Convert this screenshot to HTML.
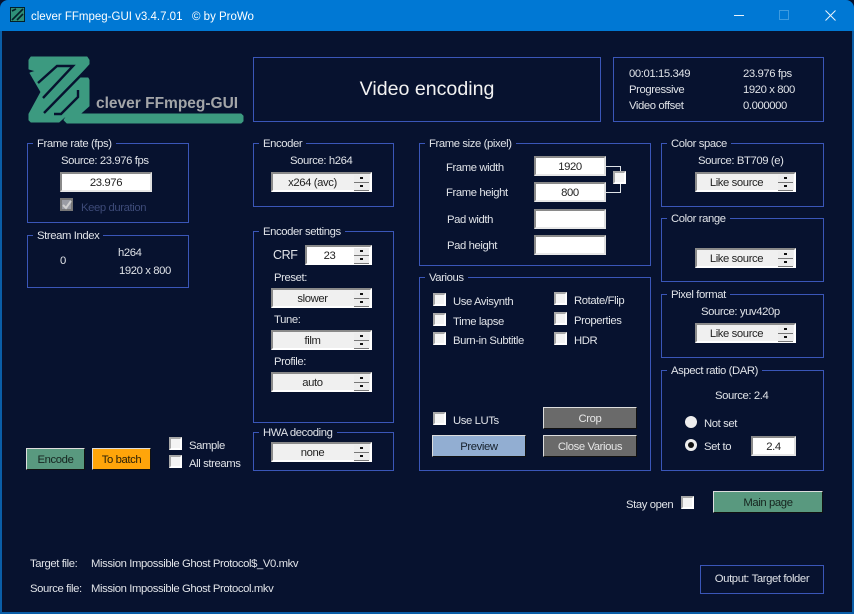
<!DOCTYPE html>
<html><head><meta charset="utf-8"><style>
html,body{margin:0;padding:0;background:#0a1a3a}
#w{position:relative;width:854px;height:614px;overflow:hidden;background:#07122f;font-family:"Liberation Sans",sans-serif;font-size:11.3px;letter-spacing:-.4px;color:#e0e3e8}
#w div{position:absolute;box-sizing:border-box;white-space:nowrap}
.t{line-height:14px;margin-top:1px}
.c{text-align:center}
.g{border:1px solid #3a56b8}
.l{background:#07122f;padding:0 4px;left:5px;top:-6px;line-height:12px;height:12px}
.i{background:#fff;border:2px solid;border-color:#8a8a8a #e0e0e0 #e8e8e8 #8a8a8a;color:#222;text-align:center;line-height:18px}
.s{background:#f0f0f0;border:2px solid;border-color:#8a8a8a #fff #fff #8a8a8a;color:#222;text-align:center;line-height:19px;width:101px;height:20px;padding-right:18px}
.s b{position:absolute;right:1px;top:1px;width:15px;height:7px;background:#ededed;border-bottom:1px solid #777;display:block}
.s i{position:absolute;right:1px;top:9px;width:15px;height:7px;background:#ededed;border-bottom:1px solid #777;display:block}
.s b:after,.s i:after{content:"";position:absolute;left:6px;top:2px;width:3px;height:2px;background:#111}
.k{width:13px;height:13px;background:#f4f4f4;border:2px solid;border-color:#a8a8a8 #fff #fff #a8a8a8}
.b{border:1px solid;border-color:#ddd #111 #111 #ddd;text-align:center;color:#16241f;line-height:22px}
</style></head><body><div id="w">
<div style="left:0;top:0;width:854px;height:31px;background:#0078d4;border-radius:8px 8px 0 0"></div>
<div style="left:0;top:31px;width:2px;height:583px;background:#0a5ea8"></div>
<div style="right:0;top:31px;width:2px;height:583px;background:#0a5ea8"></div>
<div style="left:0;top:612px;width:854px;height:2px;background:#0a5ea8"></div>
<div style="left:10px;top:7px;width:15px;height:15px;background:#2f8f78;border:1px solid #04202a"></div>
<svg style="position:absolute;left:10px;top:7px" width="15" height="15"><path d="M2 4L6 2M2 13L13 2M7 13L13 7" stroke="#04202a" stroke-width="1.6" fill="none"/></svg>
<div class="t" style="left:31px;top:9px;color:#fff;font-size:11.5px;letter-spacing:0;line-height:14px">clever FFmpeg-GUI v3.4.7.01</div>
<div class="t" style="left:192px;top:9px;color:#fff;font-size:11.5px;letter-spacing:0;line-height:14px">© by ProWo</div>
<div style="left:734px;top:15px;width:10px;height:1px;background:#e8f2fb"></div>
<div style="left:779px;top:10px;width:10px;height:10px;border:1px solid #3d9be0"></div>
<svg style="position:absolute;left:825px;top:10px" width="11" height="11"><path d="M0.5 0.5L10.5 10.5M10.5 0.5L0.5 10.5" stroke="#eaf4fc" stroke-width="1"/></svg>

<svg style="position:absolute;left:0;top:0" width="250" height="130">
<path d="M31 57H87L89 60V64L80 74V78H88L89 80V106L80 114H241L243 116V121L241 123H67L64 120L68 114L59 122H31L29 120V114L41 92L30 73L36 71L29 69V60Z" fill="#3c9a80" stroke="#3c9a80" stroke-linejoin="round"/>
<g fill="none" stroke="#07122f" stroke-width="2.4">
<path d="M38 83L57 66H73L43 98"/>
<path d="M44 113L90 66"/>
<path d="M54 114H61L78 97V90"/>
</g>
</svg>
<div class="t" style="left:96px;top:94px;font-size:15.5px;letter-spacing:0;font-weight:bold;color:#a3a5a8;line-height:18px">clever FFmpeg-GUI</div>

<div class="g c" style="left:253px;top:57px;width:348px;height:65px;font-size:19.6px;letter-spacing:0;line-height:62px;color:#f2f2f2">Video encoding</div>
<div class="g" style="left:613px;top:57px;width:211px;height:65px"></div>
<div class="t" style="left:629px;top:66px;">00:01:15.349</div><div class="t" style="left:743px;top:66px;">23.976 fps</div>
<div class="t" style="left:629px;top:82px;">Progressive</div><div class="t" style="left:743px;top:82px;">1920 x 800</div>
<div class="t" style="left:629px;top:98px;">Video offset</div><div class="t" style="left:743px;top:98px;">0.000000</div>

<div class="g" style="left:27px;top:143px;width:162px;height:80px"><div class="l">Frame rate (fps)</div></div>
<div class="t" style="left:61px;top:153px">Source: 23.976 fps</div>
<div class="i" style="left:60px;top:172px;width:92px;height:20px">23.976</div>
<div class="k" style="left:60px;top:198px;background:#9a9ca4;border-color:#777"></div>
<svg style="position:absolute;left:60px;top:198px" width="14" height="14"><path d="M3 7L6 10L11 3" stroke="#d0d0d0" stroke-width="2" fill="none"/></svg>
<div class="t" style="left:81px;top:200px;color:#3d4a78">Keep duration</div>

<div class="g" style="left:27px;top:235px;width:162px;height:53px"><div class="l">Stream Index</div></div>
<div class="t" style="left:60px;top:253px">0</div>
<div class="t" style="left:118px;top:245px">h264</div>
<div class="t" style="left:119px;top:263px">1920 x 800</div>

<div class="g" style="left:253px;top:143px;width:141px;height:64px"><div class="l">Encoder</div></div>
<div class="t" style="left:290px;top:153px">Source: h264</div>
<div class="s" style="left:271px;top:172px">x264 (avc)<b></b><i></i></div>

<div class="g" style="left:253px;top:231px;width:141px;height:192px"><div class="l">Encoder settings</div></div>
<div class="t" style="left:273px;top:247px;font-size:12.5px">CRF</div>
<div class="s" style="left:305px;top:245px;width:67px;background:#fff">23<b></b><i></i></div>
<div class="t" style="left:274px;top:270px">Preset:</div>
<div class="s" style="left:271px;top:288px">slower<b></b><i></i></div>
<div class="t" style="left:274px;top:312px">Tune:</div>
<div class="s" style="left:271px;top:330px">film<b></b><i></i></div>
<div class="t" style="left:274px;top:354px">Profile:</div>
<div class="s" style="left:271px;top:372px">auto<b></b><i></i></div>

<div class="g" style="left:253px;top:432px;width:141px;height:39px"><div class="l">HWA decoding</div></div>
<div class="s" style="left:271px;top:442px">none<b></b><i></i></div>

<div class="g" style="left:419px;top:143px;width:232px;height:123px"><div class="l">Frame size (pixel)</div></div>
<div class="t" style="left:446px;top:160px">Frame width</div>
<div class="t" style="left:446px;top:185px">Frame height</div>
<div class="t" style="left:447px;top:212px">Pad width</div>
<div class="t" style="left:447px;top:238px">Pad height</div>
<div class="i" style="left:534px;top:156px;width:72px;height:20px">1920</div>
<div class="i" style="left:534px;top:182px;width:72px;height:20px">800</div>
<div class="i" style="left:534px;top:209px;width:72px;height:20px"></div>
<div class="i" style="left:534px;top:235px;width:72px;height:20px"></div>
<div style="left:606px;top:166px;width:15px;height:27px;border:1px solid #dfe3e8;border-left:0"></div>
<div class="k" style="left:613px;top:171px"></div>

<div class="g" style="left:419px;top:277px;width:232px;height:194px"><div class="l">Various</div></div>
<div class="k" style="left:433px;top:293px"></div><div class="t" style="left:453px;top:294px">Use Avisynth</div>
<div class="k" style="left:433px;top:313px"></div><div class="t" style="left:453px;top:314px">Time lapse</div>
<div class="k" style="left:433px;top:332px"></div><div class="t" style="left:453px;top:333px">Burn-in Subtitle</div>
<div class="k" style="left:554px;top:292px"></div><div class="t" style="left:574px;top:293px">Rotate/Flip</div>
<div class="k" style="left:554px;top:312px"></div><div class="t" style="left:574px;top:313px">Properties</div>
<div class="k" style="left:554px;top:332px"></div><div class="t" style="left:574px;top:333px">HDR</div>
<div class="k" style="left:433px;top:412px"></div><div class="t" style="left:453px;top:413px">Use LUTs</div>
<div class="b" style="left:543px;top:407px;width:94px;height:22px;background:#6a6a6a;color:#e6e6e6">Crop</div>
<div class="b" style="left:432px;top:435px;width:94px;height:22px;background:#92aed2;color:#16202c">Preview</div>
<div class="b" style="left:543px;top:435px;width:94px;height:22px;background:#6a6a6a;color:#e6e6e6">Close Various</div>

<div class="g" style="left:661px;top:143px;width:163px;height:64px"><div class="l">Color space</div></div>
<div class="t" style="left:698px;top:153px">Source: BT709 (e)</div>
<div class="s" style="left:695px;top:172px">Like source<b></b><i></i></div>
<div class="g" style="left:661px;top:218px;width:163px;height:64px"><div class="l">Color range</div></div>
<div class="s" style="left:695px;top:248px">Like source<b></b><i></i></div>
<div class="g" style="left:661px;top:294px;width:163px;height:64px"><div class="l">Pixel format</div></div>
<div class="t" style="left:701px;top:304px">Source: yuv420p</div>
<div class="s" style="left:695px;top:323px">Like source<b></b><i></i></div>
<div class="g" style="left:661px;top:370px;width:163px;height:101px"><div class="l">Aspect ratio (DAR)</div></div>
<div class="t" style="left:715px;top:388px">Source: 2.4</div>
<div style="left:685px;top:416px;width:12px;height:12px;border-radius:50%;background:#eee"></div>
<div class="t" style="left:704px;top:416px">Not set</div>
<div style="left:685px;top:439px;width:12px;height:12px;border-radius:50%;background:#eee"></div>
<div style="left:688px;top:442px;width:6px;height:6px;border-radius:50%;background:#111"></div>
<div class="t" style="left:704px;top:439px">Set to</div>
<div class="i" style="left:751px;top:436px;width:45px;height:20px">2.4</div>

<div class="b" style="left:26px;top:448px;width:59px;height:22px;background:#59997f">Encode</div>
<div class="b" style="left:92px;top:448px;width:59px;height:22px;background:#ffa50a;color:#2a2008">To batch</div>
<div class="k" style="left:169px;top:437px"></div><div class="t" style="left:189px;top:438px">Sample</div>
<div class="k" style="left:169px;top:455px"></div><div class="t" style="left:189px;top:456px">All streams</div>

<div class="t" style="left:626px;top:497px">Stay open</div>
<div class="k" style="left:681px;top:496px"></div>
<div class="b" style="left:713px;top:491px;width:110px;height:22px;background:#59997f">Main page</div>

<div class="t" style="left:30px;top:556px">Target file:</div>
<div class="t" style="left:91px;top:556px">Mission Impossible Ghost Protocol$_V0.mkv</div>
<div class="t" style="left:30px;top:581px">Source file:</div>
<div class="t" style="left:91px;top:581px">Mission Impossible Ghost Protocol.mkv</div>
<div class="g c" style="left:700px;top:565px;width:124px;height:29px;line-height:27px">Output: Target folder</div>
</div></body></html>
